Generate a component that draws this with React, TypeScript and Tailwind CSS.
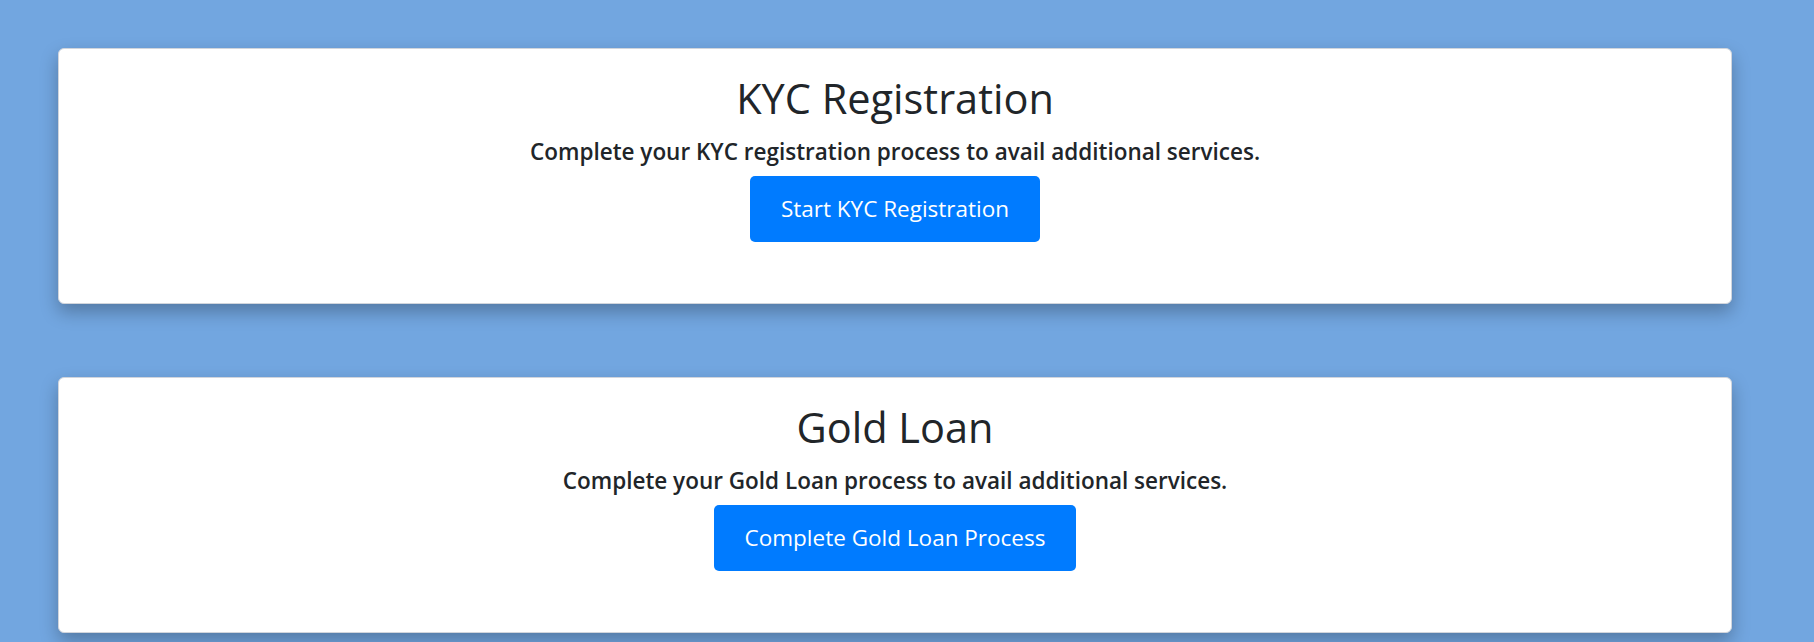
const services = [
  {
    title: 'KYC Registration',
    text: 'Complete your KYC registration process to avail additional services.',
    action: 'Start KYC Registration',
  },
  {
    title: 'Gold Loan',
    text: 'Complete your Gold Loan process to avail additional services.',
    action: 'Complete Gold Loan Process',
  },
];

function ServiceCard({ title, text, action }: { title: string; text: string; action: string }) {
  return (
    <div className="h-[256px] rounded-md border border-gray-300 bg-white shadow-[0_8px_18px_rgba(0,0,0,0.27)] flex flex-col items-center pt-[25px]">
      <h2 className="text-[41.5px] leading-[1.2] font-medium text-[#212529]">{title}</h2>
      <p className="mt-[11px] text-[22.5px] leading-[1.5] font-semibold text-[#212529]">{text}</p>
      <button
        type="button"
        className="mt-[7px] h-[66px] px-[31px] rounded-[5px] bg-[#007bff] text-white text-[22.5px] cursor-pointer"
      >
        {action}
      </button>
    </div>
  );
}

export default function App() {
  return (
    <div
      className="min-h-screen bg-[#72a6e0] pl-[58px] pr-[82px] pt-[48px] pb-[40px] flex flex-col gap-[73px]"
      style={{ fontFamily: '"Open Sans", "Noto Sans", sans-serif' }}
    >
      {services.map((s) => (
        <ServiceCard key={s.title} {...s} />
      ))}
    </div>
  );
}
